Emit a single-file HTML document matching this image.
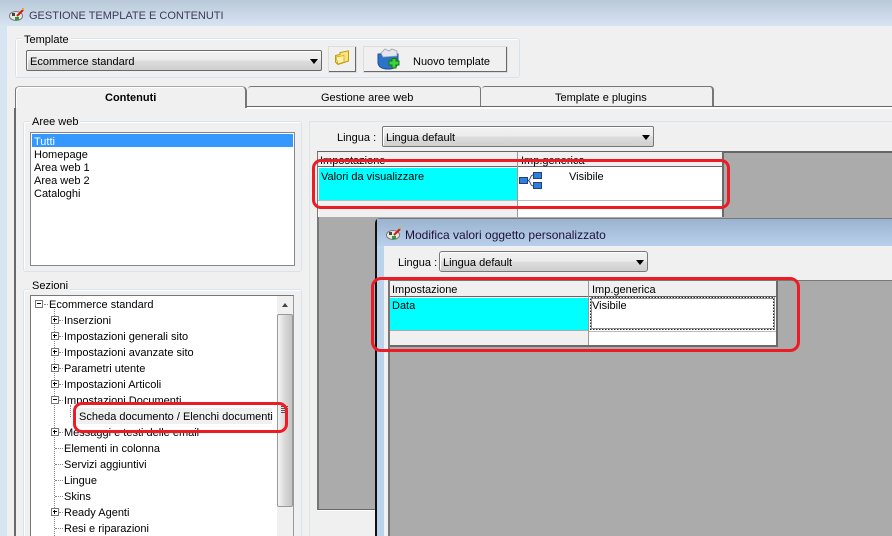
<!DOCTYPE html>
<html style="overflow:hidden;width:892px;height:536px"><head><meta charset="utf-8"><style>
html,body{margin:0;padding:0}
body{width:892px;height:536px;overflow:hidden;position:relative;background:#f0f0f0;font:11px/14px "Liberation Sans",sans-serif;color:#000}
div,span{position:absolute;box-sizing:border-box}
.t{white-space:nowrap;height:14px;margin-top:1px}
.g{border:1px solid #d9e3ec;border-radius:3px;box-shadow:inset 1px 1px 0 #fff}
.c{background:linear-gradient(#f2f2f2,#ececec 45%,#dcdcdc 55%,#cfcfcf);border:1px solid #777;border-radius:2px;box-shadow:inset 1px 1px 0 #fff}
.b{background:#f0f0f0;border:1px solid #fff;border-right:2px solid #696969;border-bottom:2px solid #696969;outline:1px solid #ddd;outline-offset:-1px}
.ar{width:0;height:0;border:4px solid transparent;border-top:5px solid #000;border-bottom:0}
.r{border:3px solid #ed1c24;border-radius:9px;z-index:50}
.p{width:8px;height:8px;border:1px solid #777;background:#fff;left:51px}
.p:before{content:"";position:absolute;left:1px;top:2px;width:4px;height:1px;background:#000}
.p.y:after{content:"";position:absolute;left:2px;top:1px;width:1px;height:4px;background:#000}
.dh{border-top:1px dotted #888;height:1px}
.dv{border-left:1px dotted #888;width:1px}
</style></head><body>
<div id="wrap" style="left:0;top:0;width:892px;height:536px;overflow:hidden">

<!-- window frame -->
<div style="left:0;top:0;width:892px;height:26px;background:linear-gradient(#b9c9d9,#d7e4f2)"></div>
<div style="left:0;top:26px;width:7px;height:510px;background:#d7e4f2"></div>
<svg style="position:absolute;left:9px;top:8px" width="16" height="14" viewBox="0 0 16 14"><ellipse cx="7" cy="8" rx="6.5" ry="4.5" fill="#e8e8e0" stroke="#777"/><rect x="3" y="5" width="3" height="3" fill="#444"/><rect x="6" y="9" width="4" height="3" fill="#2a9a3a"/><path d="M8 8L14 2" stroke="#d01818" stroke-width="2"/><path d="M13 1l2 0" stroke="#e0b020" stroke-width="2"/></svg>
<div class="t" style="left:29px;top:8px;font-size:11px;color:#3c3c58">GESTIONE TEMPLATE E CONTENUTI</div>

<!-- template group -->
<div class="g" style="left:15px;top:38px;width:505px;height:40px"></div>
<div class="t" style="left:22px;top:32px;background:#f0f0f0;padding:0 2px">Template</div>
<div class="c" style="left:26px;top:50px;width:296px;height:21px;border-color:#6a6a6a"></div>
<div class="t" style="left:30px;top:54px">Ecommerce standard</div>
<div class="ar" style="left:310px;top:59px"></div>
<div class="b" style="left:328px;top:46px;width:29px;height:27px"></div>
<svg style="position:absolute;left:334px;top:50px" width="16" height="16" viewBox="0 0 16 16"><path d="M1.500 5.500L6 4.500V2.500L14.500 .8V11L4 14.500L1.500 12Z" fill="#fbe27a" stroke="#c09a10"/><path d="M2 7L10 5.500V12L4 14Z" fill="#fff2a8" stroke="#c9a418" stroke-width=".7"/></svg>
<div class="b" style="left:363px;top:46px;width:145px;height:27px"></div>
<svg style="position:absolute;left:377px;top:48px" width="24" height="23" viewBox="0 0 24 23"><path d="M1 6H21V15Q20 21 11 21Q2 21 1 15Z" fill="#2b73c9" stroke="#1c4f96"/><path d="M4 5L8 1L12 3L15 1L20 3L20 8L6 9Z" fill="#e3e6ec" stroke="#9aa2ad" stroke-width=".8"/><path d="M15 13V10.500H19V13H22V17H19V20H15V17H12V13Z" fill="#41d13a" stroke="#0d7a10"/></svg>
<div class="t" style="left:413px;top:54px">Nuovo template</div>

<!-- tabs -->
<div style="left:246px;top:106px;width:646px;height:1px;background:#666"></div>
<div style="left:246px;top:107px;width:646px;height:2px;background:#fff"></div>
<div style="left:15px;top:86px;width:232px;height:22px;background:#f0f0f0;border-top:1px solid #a8a8a8;border-right:2px solid #777;border-left:1px solid #777;border-radius:4px 5px 0 0;box-shadow:inset 1px 1px 0 #fff"></div>
<div style="left:14px;top:108px;width:2px;height:428px;background:#6a6a6a"></div>
<div style="left:248px;top:86px;width:233px;height:20px;border-top:1px solid #777;border-right:1px solid #777;border-radius:3px 3px 0 0;background:#f0f0f0"></div>
<div style="left:482px;top:86px;width:232px;height:20px;border-top:1px solid #777;border-right:2px solid #777;border-radius:3px 4px 0 0;background:#f0f0f0"></div>
<div class="t" style="left:105px;top:90px;font-weight:bold">Contenuti</div>
<div class="t" style="left:321px;top:90px">Gestione aree web</div>
<div class="t" style="left:555px;top:90px">Template e plugins</div>

<!-- aree web -->
<div class="g" style="left:23px;top:121px;width:279px;height:151px"></div>
<div class="t" style="left:30px;top:114px;background:#f0f0f0;padding:0 2px">Aree web</div>
<div style="left:30px;top:132px;width:265px;height:134px;background:#fff;border:1px solid #828790"></div>
<div style="left:32px;top:134px;width:261px;height:13px;background:#39f"></div>
<div class="t" style="left:34px;top:134px;color:#fff">Tutti</div>
<div class="t" style="left:34px;top:147px">Homepage</div>
<div class="t" style="left:34px;top:160px">Area web 1</div>
<div class="t" style="left:34px;top:173px">Area web 2</div>
<div class="t" style="left:34px;top:186px">Cataloghi</div>

<!-- sezioni -->
<div class="g" style="left:23px;top:289px;width:279px;height:260px"></div>
<div class="t" style="left:30px;top:278px;background:#f0f0f0;padding:0 2px">Sezioni</div>
<div style="left:30px;top:295px;width:264px;height:260px;background:#fff;border:1px solid #777;border-right-color:#999"></div>
<div style="left:277px;top:296px;width:16px;height:240px;background:#f0f0f0"></div>
<div style="left:282px;top:303px;width:0;height:0;border:3.500px solid transparent;border-bottom:4px solid #444;border-top:0"></div>
<div style="left:277px;top:314px;width:16px;height:193px;background:linear-gradient(90deg,#f4f4f4,#d8d8d8 50%,#c4c4c4);border:1px solid #999;border-radius:2px"></div>
<div style="left:281px;top:406px;width:7px;height:8px;background:repeating-linear-gradient(#555 0 1px,transparent 1px 2px)"></div>

<div class="dv" style="left:54px;top:309px;height:227px"></div>
<div class="dv" style="left:70px;top:405px;height:12px"></div>
<div class="p" style="left:35px;top:300px"></div>
<div class="dh" style="left:44px;top:304px;width:4px"></div>
<div class="t" style="left:49px;top:297px">Ecommerce standard</div>

<div class="p y" style="top:316px"></div><div class="dh" style="left:59px;top:320px;width:4px"></div><div class="t" style="left:64px;top:313px">Inserzioni</div>
<div class="p y" style="top:332px"></div><div class="dh" style="left:59px;top:336px;width:4px"></div><div class="t" style="left:64px;top:329px">Impostazioni generali sito</div>
<div class="p y" style="top:348px"></div><div class="dh" style="left:59px;top:352px;width:4px"></div><div class="t" style="left:64px;top:345px">Impostazioni avanzate sito</div>
<div class="p y" style="top:364px"></div><div class="dh" style="left:59px;top:368px;width:4px"></div><div class="t" style="left:64px;top:361px">Parametri utente</div>
<div class="p y" style="top:380px"></div><div class="dh" style="left:59px;top:384px;width:4px"></div><div class="t" style="left:64px;top:377px">Impostazioni Articoli</div>
<div class="p" style="top:396px"></div><div class="dh" style="left:59px;top:400px;width:4px"></div><div class="t" style="left:64px;top:393px">Impostazioni Documenti</div>
<div style="left:77px;top:408px;width:195px;height:16px;background:#f0f0f0"></div>
<div class="t" style="left:79px;top:409px">Scheda documento / Elenchi documenti</div>
<div class="p y" style="top:428px"></div><div class="dh" style="left:59px;top:432px;width:4px"></div><div class="t" style="left:64px;top:425px">Messaggi e testi delle email</div>
<div class="dh" style="left:55px;top:448px;width:8px"></div><div class="t" style="left:64px;top:441px">Elementi in colonna</div>
<div class="dh" style="left:55px;top:464px;width:8px"></div><div class="t" style="left:64px;top:457px">Servizi aggiuntivi</div>
<div class="dh" style="left:55px;top:480px;width:8px"></div><div class="t" style="left:64px;top:473px">Lingue</div>
<div class="dh" style="left:55px;top:496px;width:8px"></div><div class="t" style="left:64px;top:489px">Skins</div>
<div class="p y" style="top:508px"></div><div class="dh" style="left:59px;top:512px;width:4px"></div><div class="t" style="left:64px;top:505px">Ready Agenti</div>
<div class="dh" style="left:55px;top:528px;width:8px"></div><div class="t" style="left:64px;top:521px">Resi e riparazioni</div>

<!-- right panel -->
<div style="left:309px;top:121px;width:583px;height:1px;background:#dce4ec"></div>
<div style="left:309px;top:122px;width:1px;height:414px;background:#dce4ec"></div>
<div class="t" style="left:337px;top:130px">Lingua :</div>
<div class="c" style="left:382px;top:126px;width:272px;height:21px"></div>
<div class="t" style="left:386px;top:130px">Lingua default</div>
<div class="ar" style="left:642px;top:135px"></div>

<div style="left:317px;top:151px;width:575px;height:359px;background:#ababab;border-top:2px solid #666;border-left:2px solid #777;border-bottom:1px solid #666"></div>
<div style="left:317px;top:510px;width:59px;height:1px;background:#fff"></div>
<div style="left:318px;top:152px;width:406px;height:65px;background:#fff;border-right:2px solid #6a6a6a"></div>
<div style="left:318px;top:152px;width:404px;height:15px;background:#f0f0f0;border-bottom:1px solid #666"></div>
<div style="left:319px;top:168px;width:198px;height:32px;background:#0ff"></div>
<div style="left:319px;top:201px;width:198px;height:16px;background:#f0f0f0"></div>
<div style="left:318px;top:200px;width:404px;height:1px;background:#bbb"></div>
<div style="left:517px;top:152px;width:1px;height:65px;background:#999"></div>
<div class="t" style="left:320px;top:153px">Impostazione</div>
<div class="t" style="left:521px;top:153px">Imp.generica</div>
<div class="t" style="left:321px;top:169px">Valori da visualizzare</div>
<div class="t" style="left:569px;top:169px">Visibile</div>
<svg style="position:absolute;left:519px;top:171px" width="23" height="19" viewBox="0 0 23 19"><path d="M9 9.500C12 9 11 4 14 4M9 9.500C12 10 11 15 14 15" fill="none" stroke="#334a88"/><rect x=".5" y="6.500" width="8" height="6" fill="#2f7fd8" stroke="#223f80"/><rect x="14.500" y="1.500" width="8" height="6" fill="#2f7fd8" stroke="#223f80"/><rect x="14.500" y="11.500" width="8" height="6" fill="#2f7fd8" stroke="#223f80"/></svg>

<!-- dialog -->
<div style="left:375px;top:218px;width:517px;height:318px;background:#f0f0f0;border-left:2px solid #111;border-top:1px solid #777;border-top-left-radius:5px;z-index:10">
<div style="left:0;top:0;width:515px;height:27px;background:linear-gradient(#9ab3d0,#b8d0ea)"></div>
<div style="left:0;top:27px;width:7px;height:290px;background:#bcd3ec"></div>
<svg style="position:absolute;left:9px;top:8px" width="16" height="14" viewBox="0 0 16 14"><ellipse cx="7" cy="8" rx="6.500" ry="4.500" fill="#e8e8e0" stroke="#777"/><rect x="3" y="5" width="3" height="3" fill="#444"/><rect x="6" y="9" width="4" height="3" fill="#2a9a3a"/><path d="M8 8L14 2" stroke="#d01818" stroke-width="2"/><path d="M13 1l2 0" stroke="#e0b020" stroke-width="2"/></svg>
<div class="t" style="left:28px;top:8px;font-size:12px;color:#1e1038">Modifica valori oggetto personalizzato</div>
<div class="t" style="left:21px;top:36px">Lingua :</div>
<div class="c" style="left:62px;top:32px;width:209px;height:21px;border-radius:3px"></div>
<div class="t" style="left:66px;top:36px">Lingua default</div>
<div class="ar" style="left:259px;top:41px"></div>

<div style="left:11px;top:61px;width:504px;height:256px;background:#ababab;border-top:1px solid #777;border-left:2px solid #777"></div>
<div style="left:13px;top:62px;width:388px;height:66px;background:#fff;border-right:2px solid #6a6a6a;border-bottom:2px solid #6a6a6a"></div>
<div style="left:13px;top:62px;width:386px;height:16px;background:#f0f0f0;border-bottom:1px solid #666"></div>
<div style="left:13px;top:79px;width:198px;height:32px;background:#0ff"></div>
<div style="left:13px;top:111px;width:198px;height:1px;background:#aaa"></div>
<div style="left:13px;top:112px;width:198px;height:14px;background:#f0f0f0"></div>
<div style="left:211px;top:112px;width:188px;height:1px;background:#bbb"></div>
<div style="left:211px;top:62px;width:1px;height:64px;background:#999"></div>
<div style="left:213px;top:78px;width:185px;height:33px;background:repeating-conic-gradient(#222 0 25%,#fff 0 50%) 0 0/3px 3px"></div>
<div style="left:215px;top:80px;width:181px;height:29px;background:#fff"></div>
<div class="t" style="left:15px;top:63px">Impostazione</div>
<div class="t" style="left:215px;top:63px">Imp.generica</div>
<div class="t" style="left:15px;top:79px">Data</div>
<div class="t" style="left:215px;top:79px">Visibile</div>
</div>

<!-- red annotations -->
<div class="r" style="left:312px;top:159px;width:418px;height:50px"></div>
<div class="r" style="left:371px;top:277px;width:429px;height:75px;border-radius:10px"></div>
<div class="r" style="left:73px;top:402px;width:215px;height:31px"></div>
</div>
</body></html>
